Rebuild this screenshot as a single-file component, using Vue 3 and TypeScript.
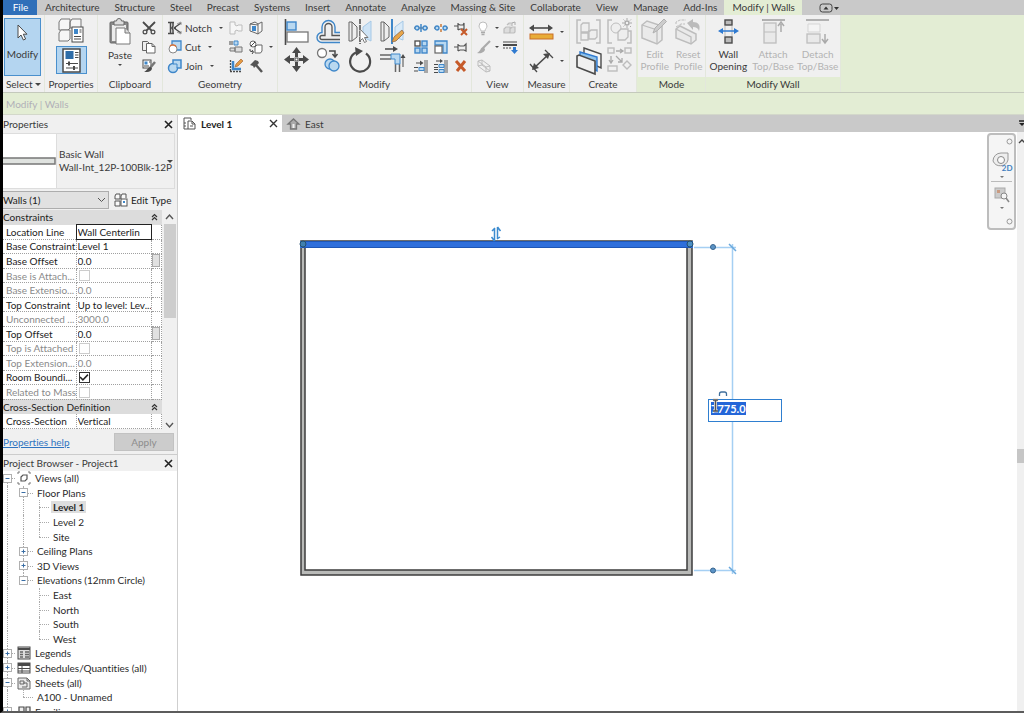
<script setup lang="ts">
import { onMounted, ref } from 'vue'

const K = '#4a4a4a'
const B = '#3f87c9'
const L = '#b9d8f0'
const G = '#bdbdbd'

const tabs: string[] = [
  'Architecture', 'Structure', 'Steel', 'Precast', 'Systems', 'Insert', 'Annotate',
  'Analyze', 'Massing & Site', 'Collaborate', 'View', 'Manage', 'Add-Ins',
]

/* Inner markup for every ribbon glyph, keyed by command. */
const icons: Record<string, string> = {
  cursor: `<path d="M2 1v13l3-3 2.4 5 2.2-1-2.3-4.8H11z" fill="#fff" stroke="${K}"/>`,
  typeProps: `<g fill="#f6f6f6" stroke="#777"><path d="M1 4l2-3h9v9l-2 2H1zM12 4l2-3h9v9h-11z"/><path d="M1 15l2-3h9v9l-2 2H1z"/></g><rect x="14" y="9" width="11" height="15" fill="#fff" stroke="${K}"/><rect x="16" y="11" width="4" height="5" fill="${B}"/><path d="M21.500 12h2M21.500 14h2M16 18.500h7M16 21h7" stroke="${K}"/>`,
  propsPanel: `<rect x="1" y="1" width="17" height="23" fill="#fff" stroke="${K}" stroke-width="1.500"/><rect x="3.500" y="3" width="8" height="8" fill="#2e6da8"/><path d="M13 4.500h3.500M13 7h3.500M13 9.500h3.500M4 15.500h12M4 20h12" stroke="${K}" stroke-width="1.200"/><path d="M7 13.500v4M12 18v4" stroke="${K}" stroke-width="2"/>`,
  paste: `<rect x="1" y="3" width="18" height="21" rx="1" fill="#8a8a8a" stroke="#666"/><rect x="3" y="6" width="14" height="16" fill="#ececec"/><path d="M5 2h2.500a2.500 2.500 0 015 0H15v4H5z" fill="#ddd" stroke="#666"/><path d="M7 9h9l5 5v11H7z" fill="#fff" stroke="#777"/><path d="M16 9v5h5" fill="#ddd" stroke="#777"/>`,
  scissors: `<path d="M1 1l9 9M13 1L4 10" stroke="${K}" stroke-width="1.800"/><circle cx="3" cy="11" r="1.900" fill="#eee" stroke="${K}" stroke-width="1.200"/><circle cx="11" cy="11" r="1.900" fill="#eee" stroke="${K}" stroke-width="1.200"/>`,
  copyClip: `<path d="M.5 1.500h5l2 2v7h-7z" fill="#eee" stroke="#666"/><path d="M4.500 3.500H10l3 3V13H4.500z" fill="#fff" stroke="#666"/><path d="M10 3.500v3h3" fill="none" stroke="#666"/>`,
  match: `<rect x="1" y="1" width="8" height="8" fill="#fff" stroke="${K}"/><rect x="2.500" y="2.500" width="3" height="3" fill="${B}"/><path d="M2 7h5M7 3h1.500" stroke="${K}"/><path d="M13 3L8 9" stroke="#777" stroke-width="2.500"/><path d="M8.500 8c-3 0-3 4-6.500 4.500 4 1.500 7.500 0 8-3z" fill="${K}"/>`,
  notch: `<path d="M0 1.500h6M0 12.500h6M2.500 1v12M5 2v3L4 7l1 2v3" fill="none" stroke="${K}" stroke-width="1.500"/><path d="M13 2L6 7l7 5M6 7h2" fill="none" stroke="${K}" stroke-width="1.300"/><path d="M9 3l4-2v3M9 11l4 2v-3" stroke="#999" fill="none"/>`,
  cutGeo: `<path d="M4 5V1h9v9H9" fill="${L}" stroke="${B}" stroke-width="1.300"/><circle cx="5" cy="9" r="4" fill="#fff" stroke="#888"/><path d="M2 6a4 4 0 016 .5" fill="none" stroke="#e07030" stroke-width="1.300"/>`,
  joinGeo: `<path d="M5 4.500V1h8v8H9.500a4.500 4.500 0 11-4.500-4.500z" fill="${L}" stroke="${B}" stroke-width="1.500"/><path d="M5 5h4v4" fill="none" stroke="${B}"/>`,
  cope: `<path d="M1 1h5v3l2 1 1-1h4v6H9L8 9 6 10v3H1z" fill="#f6f6f6" stroke="${G}"/>`,
  beamJoin: `<path d="M1 1v4M3 1v4" stroke="${K}"/><path d="M5 1h4v4H5z" fill="${L}" stroke="${B}"/><path d="M1 8h5v3H1zM6 7h7v5H6z" fill="#ddd" stroke="#777"/>`,
  unjoin: `<path d="M1.500 1v12M1 12.500h12" stroke="${K}" stroke-width="1.300" stroke-dasharray="2 1"/><path d="M4 2v8h8" fill="none" stroke="${B}" stroke-width="2.500"/><path d="M6 8l1-3 5-5 2 2-5 5z" fill="#e59a42" stroke="#a86a3a" stroke-width=".7"/>`,
  wallJoin: `<path d="M1 3l5-2 3 2 4-2v9l-4 3-5-2-3-1z" fill="#f6f6f6" stroke="#666"/><path d="M9 3v10M1 3l8 1" fill="none" stroke="#666"/><path d="M3 5h4v5H3z" fill="${B}"/>`,
  splitFace: `<circle cx="4" cy="4" r="3" fill="#fff" stroke="#666"/><path d="M2 6l4-4M1 9v2l3 1M3 10l1.500 2L3 14" fill="none" stroke="${K}"/><path d="M6 7l2-2h5v6l-1.500 2H6z" fill="#fff" stroke="#666"/>`,
  demolish: `<path d="M7 6l6 7" stroke="#555" stroke-width="2.400"/><path d="M1 6l5-5 3 1 1 2-5 5-1-2z" fill="#555"/>`,
  align: `<path d="M1.500 0v26" stroke="${K}" stroke-width="1.600"/><rect x="3" y="3" width="9" height="8" fill="${L}" stroke="${B}" stroke-width="1.400"/><rect x="3" y="13" width="21" height="10" fill="#fff" stroke="#777" stroke-width="1.300"/>`,
  offset: `<path d="M24 16.500h-8V8a3.500 3.500 0 00-7 0v8.500H6a2 2 0 000 4h18" fill="none" stroke="#555" stroke-width="1.300"/><path d="M24 13.500h-5V8a6.500 6.500 0 00-13 0v5.500a5 5 0 000 10h18" fill="none" stroke="${B}" stroke-width="1.400"/>`,
  mirrorPick: `<path d="M1 3h3l5 5v10l-5 4H1zM4 3v19" fill="#eee" stroke="#666"/><path d="M12 0v25" stroke="${K}" stroke-width="1.500" stroke-dasharray="5 1"/><path d="M23 2v20l-8-4V8z" fill="#cfe4f6" stroke="#a5c8e6"/><path d="M12 10v12l2.500-2.500 2 4 2-1-2-4H20z" fill="#fff" stroke="#777"/>`,
  mirrorDraw: `<path d="M1 3h3l5 5v10l-5 4H1zM4 3v19" fill="#eee" stroke="#666"/><path d="M12 0v25" stroke="${B}" stroke-width="2"/><path d="M23 2v19l-8-3V8z" fill="#d9eaf8" stroke="#a5c8e6"/><path d="M12 23l2-5 8-7 2 3-8 8z" fill="#e8a548" stroke="#8b6a4b" stroke-width=".8"/>`,
  move: `<path d="M12.500 0l4.500 6h-3v4h-3V6H8zM12.500 25l4.500-6h-3v-4h-3v4H8zM0 12.500L6 8v3h4v3H6v3zM25 12.500L19 8v3h-4v3h4v3z" fill="${K}"/><rect x="11" y="11" width="3" height="3" fill="#fff" stroke="${K}"/>`,
  copyObj: `<circle cx="6" cy="6" r="4.500" fill="#fff" stroke="#777" stroke-width="1.300"/><path d="M13 4h6v5M16.500 7L19 10l2.500-3" fill="none" stroke="${K}" stroke-width="1.500"/><circle cx="14" cy="17" r="5" fill="${L}" stroke="${B}" stroke-width="1.300"/><circle cx="18" cy="19" r="5" fill="${L}" stroke="${B}" stroke-width="1.300"/>`,
  rotate: `<path d="M8 5.500A10 10 0 1018 6.500" fill="none" stroke="${K}" stroke-width="2.200"/><path d="M7 0l8 4-7 5z" fill="${K}"/>`,
  trimCorner: `<path d="M0 8h11M0 12h11M15.500 25V17M19.500 25V17" stroke="#666" stroke-width="1.500"/><path d="M5 2h10" stroke="${K}" stroke-width="1.500"/><path d="M13-1l5 3-5 3z" fill="${K}"/><path d="M11 7h9v10h-5v-5h-4z" fill="${L}" stroke="${B}"/><path d="M23 20V9" stroke="${K}"/><path d="M20.500 11L23 7l2.500 4z" fill="${K}"/>`,
  split: `<path d="M0 7h14" stroke="${K}"/><rect x="1" y="5" width="4" height="4" rx="2" fill="${L}" stroke="${B}" stroke-width="1.300"/><rect x="9" y="5" width="4" height="4" rx="2" fill="${L}" stroke="${B}" stroke-width="1.300"/><path d="M7 3v8" stroke="${B}" stroke-width="1.500"/>`,
  splitGap: `<path d="M0 7h5M9 7h5" stroke="${K}"/><rect x="1" y="5" width="4" height="4" rx="2" fill="${L}" stroke="${B}" stroke-width="1.300"/><rect x="9" y="5" width="4" height="4" rx="2" fill="${L}" stroke="${B}" stroke-width="1.300"/><path d="M7 3v3M7 8v3" stroke="#c77a3a" stroke-width="1.500"/>`,
  unpin: `<path d="M0 5h4M4 2v7M4 3l2 1h3l1-2v7l-1-1H6L4 9" fill="none" stroke="#555" stroke-width="1.200"/><path d="M7 8l6 6M13 8l-6 6" stroke="#c65a2a" stroke-width="2"/>`,
  array: `<g fill="${L}" stroke="${B}" stroke-width="1.400"><rect x="1" y="8" width="5" height="5"/><rect x="8" y="8" width="5" height="5"/><rect x="8" y="1" width="5" height="5"/></g><rect x="1" y="1" width="5" height="5" fill="#fff" stroke="${K}" stroke-width="1.300"/>`,
  scale: `<path d="M1 1h12v12H9V5H1z" fill="${L}" stroke="${B}" stroke-width="1.300"/><rect x="1" y="6" width="7" height="7" fill="#fff" stroke="#666" stroke-width="1.200"/>`,
  pin: `<path d="M0 7h4M4 4v7M4 5l2 1h4l2-2v7l-2-1H6l-2 1" fill="none" stroke="#555" stroke-width="1.200"/>`,
  trimSingle: `<path d="M2 4h5M0 8.500h4M0 12h4" stroke="${K}" stroke-width="1.200"/><path d="M6 1.500L9.500 4 6 6.500z" fill="${K}"/><path d="M11 1v13M13 1v13" stroke="#777" stroke-width="1.200"/><rect x="5" y="8.500" width="5" height="3" fill="${L}" stroke="${B}"/>`,
  trimMulti: `<path d="M2 2h5M0 5.500h4M0 8.500h4M0 10.500h4M0 13.500h4" stroke="${K}"/><path d="M6 0l3 2-3 2z" fill="${K}"/><path d="M11 1v13M13 1v13" stroke="#777" stroke-width="1.200"/><path d="M5 5.500h5v3H5zM5 10.500h5v3H5z" fill="${L}" stroke="${B}"/>`,
  del: `<path d="M2 2l9 10M11 2L3 12" stroke="#c65a2a" stroke-width="3"/>`,
  bulb: `<path d="M4 10C4 8 2 7 2 5a4 4 0 018 0c0 2-2 3-2 5z" fill="#fff" stroke="${G}"/><path d="M4 11.500h4M4.500 13.500h3" stroke="#aaa" stroke-width="1.500"/>`,
  displace: `<path d="M1 8l2-2h4v5l-1 1H1zM7 8l2-2h3v5l-1 1H7zM4 4l2-2h3v3" fill="#ddd" stroke="${G}" stroke-width="1.200"/><path d="M9 2l3-1v3" fill="none" stroke="#aaa"/>`,
  brush: `<path d="M13 1L6 8" stroke="#aaa" stroke-width="2.200"/><path d="M6 7C3 8 4 11 0 13c4 1 8-1 8-4z" fill="#aaa"/>`,
  linework: `<path d="M0 2h14" stroke="${K}"/><path d="M0 5h14" stroke="${K}" stroke-width="2"/><path d="M0 8h9" stroke="${K}" stroke-dasharray="2 1"/><path d="M8 10h2V7h3v3h2l-3.500 4z" fill="#2f7ad0"/>`,
  selBox: `<path d="M1 2l4-1 8 6v5l-4 1-8-6zM1 2l8 6v5M9 8l4-1M5 1v5l8 6M5 6L1 7" fill="none" stroke="${G}"/>`,
  measure: `<path d="M3 4h18" stroke="${K}" stroke-width="1.600"/><path d="M0 4l5-3.500v7zM24 4l-5-3.500v7z" fill="${K}"/><rect x="1" y="10" width="23" height="5" fill="#e8ac38" stroke="#c96f28"/>`,
  dimension: `<path d="M4 20L20 5" stroke="${K}" stroke-width="1.600"/><path d="M1 15l7 8M16 1l8 8" stroke="${K}" stroke-width="1.300"/><path d="M3 21l2-7 5 5zM21 4l-7 1 5 5z" fill="${K}"/>`,
  group: `<path d="M5 1H1v23h4M20 1h4v23h-4" fill="none" stroke="${G}" stroke-width="1.500"/><path d="M5 6l2-2h6v7l-1 2H5zM5 14h7v7H5zM13 13l2-2h6v7l-2 2h-6z" fill="#eee" stroke="${G}" stroke-width="1.300"/>`,
  assembly: `<path d="M5 1H1v23h4M20 12h4v12h-4" fill="none" stroke="${G}" stroke-width="1.500"/><circle cx="9" cy="9" r="5" fill="#eee" stroke="${G}"/><path d="M11 13l3-3h7v8l-3 3h-7z" fill="#eee" stroke="${G}" stroke-width="1.300"/><circle cx="20" cy="4" r="2" fill="none" stroke="#aaa" stroke-width="1.500"/><path d="M20-1v2M20 7v2M15 4h2M23 4h2M16.500.5l1 1M23 7l1 1M24 .5l-1 1M16.500 7.500l1-1" stroke="#aaa"/>`,
  parts: `<path d="M8 1l17 6v14L8 13z" fill="#f4f4f4" stroke="${K}" stroke-width="1.400"/><path d="M4 5l17 5v14L4 16z" fill="#8fc2ea" stroke="#2f7ad0" stroke-width="1.400"/><path d="M1 9l2-1 16 6v13L1 20z" fill="#f0f0f0" stroke="${K}" stroke-width="1.600"/>`,
  similar: `<g fill="none" stroke="${G}" stroke-width="1.400"><rect x="1" y="1" width="6" height="5"/><rect x="18" y="1" width="6" height="5"/><rect x="1" y="19" width="9" height="5"/><path d="M20 14l4 4-4 4-4-4z"/></g><path d="M9 4h7M4 9v7M9 9l6 6M13 2l3 2-3 2M2 13l2 3 2-3M15 11v4h-4" fill="none" stroke="#aaa" stroke-width="1.300"/>`,
  editProfile: `<path d="M1 6l5-4 15 5v14l-5 4L1 19z" fill="#eaeaea" stroke="${G}" stroke-width="1.500"/><path d="M1 6l15 5v14M16 11l5-4" fill="none" stroke="${G}" stroke-width="1.300"/><path d="M12 14l2-5 9-9 2.500 2.500-9 9z" fill="#ccc" stroke="#b0b0b0"/>`,
  resetProfile: `<path d="M1 8l5-3h4M1 5V3l4-2h6" fill="none" stroke="${G}" stroke-dasharray="3 1"/><path d="M1 10l4-3 16 8v6l-5 4L1 19z" fill="#eaeaea" stroke="${G}" stroke-width="1.500"/><path d="M1 10l15 8v7" fill="none" stroke="${G}" stroke-width="1.300"/><path d="M12 4l6-4v3c5 0 8 3 6 9-1-3-3-4-6-4v3z" fill="#bbb"/>`,
  opening: `<rect x="8" y="1" width="7" height="5" fill="#bbb" stroke="${K}" stroke-width="1.400"/><rect x="8" y="18" width="7" height="6" fill="#bbb" stroke="${K}" stroke-width="1.400"/><path d="M8 7v10M15 7v10" stroke="#bbb"/><path d="M3 12h17" stroke="#2f7ad0" stroke-width="1.500"/><path d="M1 12l5-3v6zM22 12l-5-3v6z" fill="#2f7ad0"/>`,
  attach: `<path d="M0 1h23" stroke="#aaa" stroke-width="1.800"/><rect x="2" y="4" width="12" height="20" fill="#e9e9e9" stroke="${G}" stroke-width="1.300"/><path d="M2 13h12" stroke="${G}"/><path d="M19 13V5M16 7l3-4 3 4" fill="none" stroke="#aaa" stroke-width="1.500"/>`,
  detach: `<path d="M0 1h23" stroke="#aaa" stroke-width="1.800"/><path d="M2 5h12v8H2z" fill="#f4f4f4" stroke="#d5d5d5"/><rect x="1" y="15" width="13" height="9" fill="#e9e9e9" stroke="${G}" stroke-width="1.300"/><path d="M19 15v8M16 20l3 4 3-4" fill="none" stroke="#aaa" stroke-width="1.500"/>`,
}

const clipTools = ['scissors', 'copyClip', 'match']
const geoMenus = [
  { icon: 'notch', text: 'Notch' },
  { icon: 'cutGeo', text: 'Cut' },
  { icon: 'joinGeo', text: 'Join' },
]
const geoTools = ['cope', 'wallJoin', 'beamJoin', 'splitFace', 'unjoin', 'demolish']
const modifyLarge = ['align', 'offset', 'mirrorPick', 'mirrorDraw', 'move', 'copyObj', 'rotate', 'trimCorner']
const modifySmall = ['split', 'splitGap', 'unpin', 'array', 'scale', 'pin', 'trimSingle', 'trimMulti', 'del']
const createTools = ['group', 'assembly', 'parts', 'similar']
const modeTools = [
  { icon: 'editProfile', a: 'Edit', b: 'Profile' },
  { icon: 'resetProfile', a: 'Reset', b: 'Profile' },
]
const wallTools = [
  { icon: 'opening', a: 'Wall', b: 'Opening', on: true },
  { icon: 'attach', a: 'Attach', b: 'Top/Base', on: false },
  { icon: 'detach', a: 'Detach', b: 'Top/Base', on: false },
]

interface Prop {
  id: string
  label: string
  value?: string
  check?: boolean
  off?: boolean
  more?: boolean
  framed?: boolean
}
const groups: { title: string; rows: Prop[] }[] = [
  {
    title: 'Constraints',
    rows: [
      { id: 'loc', label: 'Location Line', value: 'Wall Centerlin', framed: true },
      { id: 'bc', label: 'Base Constraint', value: 'Level 1' },
      { id: 'bo', label: 'Base Offset', value: '0.0', more: true },
      { id: 'ba', label: 'Base is Attach...', check: false, off: true },
      { id: 'be', label: 'Base Extensio...', value: '0.0', off: true },
      { id: 'tc', label: 'Top Constraint', value: 'Up to level: Lev...' },
      { id: 'uh', label: 'Unconnected ...', value: '3000.0', off: true },
      { id: 'to', label: 'Top Offset', value: '0.0', more: true },
      { id: 'ta', label: 'Top is Attached', check: false, off: true },
      { id: 'te', label: 'Top Extension...', value: '0.0', off: true },
      { id: 'rb', label: 'Room Boundi...', check: true },
      { id: 'rm', label: 'Related to Mass', check: false, off: true },
    ],
  },
  { title: 'Cross-Section Definition', rows: [{ id: 'cs', label: 'Cross-Section', value: 'Vertical' }] },
]

/* Guide cells: b = box, l = line, t = tee, e = end elbow, n = empty. */
interface Node {
  text: string
  cells: string
  sign?: string
  icon?: string
  bold?: boolean
}
const tree: Node[] = [
  { text: 'Views (all)', cells: 'b', sign: '-', icon: 'views' },
  { text: 'Floor Plans', cells: 'lb', sign: '-' },
  { text: 'Level 1', cells: 'llt', bold: true },
  { text: 'Level 2', cells: 'llt' },
  { text: 'Site', cells: 'lle' },
  { text: 'Ceiling Plans', cells: 'lb', sign: '+' },
  { text: '3D Views', cells: 'lb', sign: '+' },
  { text: 'Elevations (12mm Circle)', cells: 'lb', sign: '-' },
  { text: 'East', cells: 'lnt' },
  { text: 'North', cells: 'lnt' },
  { text: 'South', cells: 'lnt' },
  { text: 'West', cells: 'lne' },
  { text: 'Legends', cells: 'b', sign: '+', icon: 'legends' },
  { text: 'Schedules/Quantities (all)', cells: 'b', sign: '+', icon: 'schedules' },
  { text: 'Sheets (all)', cells: 'b', sign: '-', icon: 'sheets' },
  { text: 'A100 - Unnamed', cells: 'le' },
  { text: 'Families', cells: 'b', sign: '+', icon: 'families' },
]
const treeIcons: Record<string, string> = {
  views: `<path d="M3 1H1v2M11 1h2v2M3 13H1v-2M11 13h2v-2" fill="none" stroke="#777"/><path d="M4 6l2-2h4v4l-2 2H4z" fill="#fff" stroke="#555" stroke-width="1.200"/>`,
  legends: `<rect x="1" y="1" width="12" height="12" fill="#ddd" stroke="${K}"/><path d="M1 3h12" stroke="${K}" stroke-width="2"/><path d="M3 6h3M3 8.500h3M3 11h3M8 6h4M8 8.500h4M8 11h4" stroke="#666" stroke-width="1.300"/>`,
  schedules: `<rect x="1" y="2" width="12" height="10" fill="#fff" stroke="${K}"/><path d="M1 3.500h12" stroke="${K}" stroke-width="3"/><path d="M1 7.500h12M1 10h12M5 4v8" stroke="${K}"/>`,
  sheets: `<path d="M1 2h9l3 3v8H1z" fill="#e8e8e8" stroke="#666"/><path d="M3 5h4v3H3zM6 7h4v4H5M10 2v3h3" fill="none" stroke="#666"/>`,
  families: `<path d="M2 2h5v6H2zM9 2h4v6H9zM2 10h5v4H2zM9 10h4v4H9z" fill="#eee" stroke="${K}" stroke-width="1.200"/>`,
}

const length = ref('7775.0')
const lengthBox = ref<HTMLInputElement | null>(null)
onMounted(() => {
  lengthBox.value?.focus()
  lengthBox.value?.select()
})
</script>

<template>
  <div class="app">
    <nav class="tabs">
      <button class="file">File</button>
      <button v-for="t in tabs" :key="t">{{ t }}</button>
      <button class="current">Modify | Walls</button>
      <button class="collapse" aria-label="Minimize ribbon">
        <svg width="20" height="10"><rect x="1" y="1" width="12" height="8" rx="2.500" fill="none" stroke="#444" /><path d="M4.500 6.500L7 3.500l2.500 3zM15 4h5l-2.500 3z" fill="#333" /></svg>
      </button>
    </nav>

    <div class="ribbon">
      <section class="panel w-select">
        <div class="tools">
          <button class="big-modify"><svg width="13" height="18" v-html="icons.cursor" /><span>Modify</span></button>
        </div>
        <h2>Select <i class="caret wide" /></h2>
      </section>

      <section class="panel w-props">
        <div class="tools column">
          <button aria-label="Type Properties"><svg width="26" height="25" v-html="icons.typeProps" /></button>
          <button class="pressed" aria-label="Properties"><svg width="19" height="25" v-html="icons.propsPanel" /></button>
        </div>
        <h2>Properties</h2>
      </section>

      <section class="panel w-clip">
        <div class="tools clip">
          <button class="paste"><svg width="23" height="27" v-html="icons.paste" /><span>Paste</span><i class="caret" /></button>
          <div class="triple">
            <button v-for="n in clipTools" :key="n" :aria-label="n"><svg width="14" height="14" v-html="icons[n]" /></button>
          </div>
        </div>
        <h2>Clipboard</h2>
      </section>

      <section class="panel w-geo">
        <div class="tools geo">
          <div class="triple menus">
            <button v-for="m in geoMenus" :key="m.text"><svg width="14" height="14" v-html="icons[m.icon]" /><span>{{ m.text }}</span><i class="caret" /></button>
          </div>
          <div class="pairs">
            <button v-for="n in geoTools" :key="n" :aria-label="n"><svg width="14" height="14" v-html="icons[n]" /></button>
          </div>
          <i class="caret" />
        </div>
        <h2>Geometry</h2>
      </section>

      <section class="panel w-mod">
        <div class="tools mod">
          <div class="large">
            <button v-for="n in modifyLarge" :key="n" :aria-label="n"><svg width="25" height="26" v-html="icons[n]" /></button>
          </div>
          <div class="small">
            <button v-for="n in modifySmall" :key="n" :aria-label="n"><svg width="14" height="14" v-html="icons[n]" /></button>
          </div>
        </div>
        <h2>Modify</h2>
      </section>

      <section class="panel w-view">
        <div class="tools view">
          <button aria-label="Hide"><svg width="14" height="14" v-html="icons.bulb" /><i class="caret" /></button>
          <button aria-label="Displace"><svg width="14" height="14" v-html="icons.displace" /></button>
          <button aria-label="Override"><svg width="14" height="14" v-html="icons.brush" /><i class="caret" /></button>
          <button aria-label="Linework"><svg width="14" height="14" v-html="icons.linework" /></button>
          <button aria-label="Selection Box"><svg width="14" height="14" v-html="icons.selBox" /></button>
        </div>
        <h2>View</h2>
      </section>

      <section class="panel w-meas">
        <div class="tools column meas">
          <button aria-label="Measure"><svg width="25" height="17" v-html="icons.measure" /><i class="caret" /></button>
          <button aria-label="Dimension"><svg width="25" height="25" v-html="icons.dimension" /><i class="caret" /></button>
        </div>
        <h2>Measure</h2>
      </section>

      <section class="panel w-create">
        <div class="tools create">
          <button v-for="n in createTools" :key="n" :aria-label="n"><svg width="26" height="27" v-html="icons[n]" /></button>
        </div>
        <h2>Create</h2>
      </section>

      <section class="panel w-mode context">
        <div class="tools captioned">
          <button v-for="m in modeTools" :key="m.a" disabled><svg width="27" height="26" v-html="icons[m.icon]" /><span>{{ m.a }}<br />{{ m.b }}</span></button>
        </div>
        <h2>Mode</h2>
      </section>

      <section class="panel w-wall context">
        <div class="tools captioned">
          <button v-for="m in wallTools" :key="m.a" :disabled="!m.on"><svg width="23" height="26" v-html="icons[m.icon]" /><span>{{ m.a }}<br />{{ m.b }}</span></button>
        </div>
        <h2>Modify Wall</h2>
      </section>
    </div>

    <div class="options">Modify | Walls</div>

    <main class="work">
      <aside class="side">
        <header class="bar">
          <span>Properties</span>
          <button aria-label="Close Properties"><svg width="9" height="9"><path d="M1 1l7 7M8 1L1 8" stroke="#222" stroke-width="1.600" /></svg></button>
        </header>

        <button class="type">
          <svg class="preview" width="53" height="54"><rect width="53" height="54" fill="#fff" /><rect x="-1" y="24" width="53" height="6" fill="#dfe2df" stroke="#777" stroke-width="1.500" /></svg>
          <span>Basic Wall<br />Wall-Int_12P-100Blk-12P</span>
          <i class="caret wide" />
        </button>

        <div class="filter">
          <span class="pick">
            <select aria-label="Selection filter"><option>Walls (1)</option></select>
            <svg width="9" height="6"><path d="M1 1l3.500 3.500L8 1" fill="none" stroke="#555" /></svg>
          </span>
          <button class="edit-type">
            <svg width="14" height="14"><path d="M1 3l1-2h4v5H1zM7 6V3l1-2h4v4M1 8h5v5H1z" fill="#f8f8f8" stroke="#555" /><rect x="7" y="6" width="6" height="7" fill="#fff" stroke="#555" /><path d="M9 8h2v2H9z" fill="#3f87c9" /></svg>
            Edit Type
          </button>
        </div>

        <div class="grid">
          <table>
            <colgroup><col class="name-col" /><col /><col class="more-col" /></colgroup>
            <tbody v-for="g in groups" :key="g.title">
              <tr class="group">
                <th colspan="3"><div><span>{{ g.title }}</span><svg width="7" height="8"><path d="M1 4l2.500-2.500L6 4M1 7l2.500-2.500L6 7" fill="none" stroke="#333" stroke-width="1.200" /></svg></div></th>
              </tr>
              <tr v-for="r in g.rows" :key="r.id" :class="{ off: r.off }">
                <td class="name"><label :for="r.id">{{ r.label }}</label></td>
                <td class="val" :class="{ framed: r.framed }">
                  <input v-if="r.value" :id="r.id" type="text" :value="r.value" :disabled="r.off" />
                  <input v-else :id="r.id" type="checkbox" :checked="r.check" :disabled="r.off" />
                </td>
                <td class="more"><button v-if="r.more" :aria-label="`Associate ${r.label}`" /></td>
              </tr>
            </tbody>
          </table>
          <div class="scroll">
            <svg width="9" height="6"><path d="M1 5l3.500-4L8 5" fill="none" stroke="#555" stroke-width="1.400" /></svg>
            <i />
            <svg width="9" height="6"><path d="M1 1l3.500 4L8 1" fill="none" stroke="#555" stroke-width="1.400" /></svg>
          </div>
        </div>

        <footer class="apply"><a href="#">Properties help</a><button disabled>Apply</button></footer>

        <header class="bar browser">
          <span>Project Browser - Project1</span>
          <button aria-label="Close Project Browser"><svg width="9" height="9"><path d="M1 1l7 7M8 1L1 8" stroke="#222" stroke-width="1.600" /></svg></button>
        </header>
        <div class="tree-box">
          <ul class="tree">
            <li v-for="n in tree" :key="n.text" :class="{ root: n.icon }">
              <template v-for="(c, i) in n.cells" :key="i">
                <span class="cell" :class="[c, { top: n.text === 'Views (all)', last: n.text.startsWith('Elevations') }]"><button v-if="c === 'b'" :aria-label="`Toggle ${n.text}`"><svg width="7" height="7"><path d="M1.500 3.500h4" stroke="#3a6ea5" /><path v-if="n.sign === '+'" d="M3.500 1.500v4" stroke="#3a6ea5" /></svg></button></span>
              </template>
              <svg v-if="n.icon" class="glyph" width="14" height="14" v-html="treeIcons[n.icon]" />
              <span class="text" :class="{ bold: n.bold }">{{ n.text }}</span>
            </li>
          </ul>
        </div>
      </aside>

      <section class="stage">
        <div class="docs">
          <div class="doc active">
            <svg width="13" height="13"><path d="M1 1h7v2M5 12H1V1M5 12V4h4l3 3v5zM9 4v3h3M1 6h2M3 9H1M7 9h3" fill="none" stroke="#555" /></svg>
            <button class="title">Level 1</button>
            <button class="x" aria-label="Close Level 1"><svg width="9" height="9"><path d="M1 1l7 7M8 1L1 8" stroke="#333" stroke-width="1.400" /></svg></button>
          </div>
          <div class="doc">
            <svg width="13" height="12"><path d="M1 6l5.500-5L12 6H9.500v5h-6V6z" fill="#aaa" stroke="#777" stroke-width="1.300" /><path d="M5.500 6h2v4h-2z" fill="#eee" /></svg>
            <button class="title">East</button>
          </div>
          <button class="list" aria-label="Open views"><svg width="5" height="7"><path d="M0 1h5" stroke="#222" stroke-width="1.500" /><path d="M0 3h6L3 6z" fill="#222" /></svg></button>
        </div>

        <div class="view-row">
          <div class="canvas">
            <svg class="drawing" width="100%" height="100%">
              <path d="M123 109h391v334H123z M127 115v323h382V115z" fill="#b9bab8" fill-rule="evenodd" stroke="#3d3d3d" stroke-width="1.500" />
              <rect x="122" y="109" width="393" height="7" fill="#2f6fdb" />
              <path d="M124 109.500h389M124 115.500h389" stroke="#1f56b5" />
              <circle cx="125" cy="112" r="3" fill="#3f7fae" stroke="#24506f" />
              <circle cx="512" cy="112" r="3" fill="#4c8fc4" stroke="#24506f" />
              <path d="M316.500 109V96M319.500 95v12M313.500 105l3 4M319.500 95l3 4M317 96l-3 3M319 107l3-2" fill="none" stroke="#3c8bcf" stroke-width="1.500" />
              <path d="M516 115.500h42M516 438.500h42M554.500 112v330" stroke="#a5cff3" stroke-width="1.500" />
              <path d="M551 112l7 7M551 435l7 7" stroke="#6aa9dd" stroke-width="1.500" />
              <circle cx="535" cy="115" r="2.500" fill="#5b93c6" stroke="#37658f" />
              <circle cx="535" cy="438.500" r="2.500" fill="#5b93c6" stroke="#37658f" />
              <path d="M541.500 264v-2q0-2 2-2h3q2 0 2 2v2" fill="none" stroke="#3f6f9d" stroke-width="1.300" />
            </svg>
            <input ref="lengthBox" v-model="length" class="length" type="text" aria-label="Distance" />
            <svg class="ibeam" width="7" height="13"><path d="M1 1h2l.5 1 .5-1h2M3.500 2v9M1 12h2l.5-1 .5 1h2" fill="none" stroke="#dcdcdc" stroke-width="3" /><path d="M1 1h2l.5 1 .5-1h2M3.500 2v9M1 12h2l.5-1 .5 1h2" fill="none" stroke="#555" stroke-width="1.300" /></svg>
            <div class="nav">
              <svg width="7" height="7"><circle cx="3.500" cy="3.500" r="2.500" fill="none" stroke="#999" /></svg>
              <button aria-label="Steering wheel 2D">
                <svg width="22" height="22"><path d="M2 11a8 8 0 018-8h7v7a8 8 0 01-15 1z" fill="#eee" stroke="#999" /><circle cx="10" cy="10" r="3.500" fill="#fafafa" stroke="#888" /></svg>
                <b>2D</b>
              </button>
              <i class="caret" />
              <hr />
              <button aria-label="Zoom"><svg width="16" height="16"><rect x="1" y="1" width="10" height="10" fill="#ccc" stroke="#aaa" /><path d="M3 3h3v3H3z" fill="#c99b82" /><circle cx="10" cy="9" r="3" fill="#f5f5f5" stroke="#888" /><path d="M12 11l3 4" stroke="#888" stroke-width="1.500" /></svg></button>
              <i class="caret" />
              <svg class="foot" width="7" height="7"><circle cx="3.500" cy="3.500" r="2.500" fill="none" stroke="#999" /></svg>
            </div>
          </div>
          <div class="vscroll"><svg width="7" height="7"><path d="M2 5l3-3 3 3" fill="none" stroke="#444" stroke-width="1.400" /></svg><i /></div>
        </div>
      </section>
    </main>
  </div>
</template>

<style>
body { margin: 0; }
</style>

<style scoped>
* { box-sizing: border-box; }
.app {
  display: flex;
  flex-direction: column;
  height: 100vh;
  overflow: hidden;
  border-left: 3px solid #000;
  border-bottom: 2px solid #5c5c5c;
  background: #f0f0f0;
  color: #3a3a3a;
  font: 10px/12px Lato, "Open Sans", sans-serif;
  font-variant-ligatures: none;
}
button, input, select { font: inherit; font-variant-ligatures: none; color: inherit; }
button { padding: 0; border: 0; background: none; display: flex; align-items: center; justify-content: center; }
svg { display: block; flex: none; overflow: visible; }
h2 { margin: 0; font-size: 10px; line-height: 15px; font-weight: 400; text-align: center; }
.caret { flex: none; width: 0; height: 0; border: 2px solid transparent; border-top-color: #444; border-bottom: 0; }
.caret.wide { display: inline-block; border-width: 3px 3px 0; vertical-align: 2px; }

.tabs { display: flex; flex: none; height: 15px; background: #c9c9c9; }
.tabs button { padding: 0 7px 1px 8px; white-space: nowrap; }
.tabs .file { width: 34px; background: #2f6fb9; color: #fff; }
.tabs .current { background: #e3edd4; }
.tabs .collapse { padding: 0 17px; }

.ribbon { display: flex; flex: none; height: 77px; background: #e3edd4; }
.panel { display: flex; flex-direction: column; flex: none; background: #f0f0f0; border-right: 1px solid #e3e7dc; }
.tools { flex: 1; display: flex; padding-top: 3px; }
.panel h2 { flex: none; white-space: nowrap; }
.context h2 { background: #e3edd4; }
.w-select { width: 42px; }
.w-props { width: 53px; }
.w-clip { width: 65px; }
.w-geo { width: 115px; }
.w-mod { width: 194px; }
.w-view { width: 52px; }
.w-meas { width: 46px; }
.w-create { width: 67px; margin-right: 1px; }
.w-mode { width: 68px; }
.w-wall { width: 135px; }

.big-modify { flex-direction: column; justify-content: flex-start; gap: 6px; width: 37px; height: 58px; margin-left: 1px; padding-top: 5px; border: 1px solid #4a90cd; background: #b4d5f0; }
.column { flex-direction: column; align-items: center; gap: 1px; }
.column .pressed { width: 31px; height: 28px; margin-top: 2px; border: 1px solid #4a90cd; background: #b4d5f0; }
.clip { gap: 8px; padding-left: 8px; }
.paste { flex-direction: column; justify-content: flex-start; width: 28px; gap: 3px; padding-top: 1px; }
.triple { display: grid; grid-template-rows: repeat(3, 19px); }
.geo { padding-left: 5px; align-items: flex-start; }
.menus { width: 58px; }
.menus button { justify-content: flex-start; gap: 3px; }
.menus .caret { margin-left: 4px; }
.pairs { display: grid; grid-template: repeat(3, 19px) / 20px 20px; }
.geo > .caret { margin: 28px 0 0 3px; }
.mod { padding-left: 3px; gap: 2px; }
.large { display: grid; grid-template: repeat(2, 28px) / repeat(4, 32px); }
.large button { justify-content: flex-start; padding-left: 3px; }
.small { display: grid; grid-template: repeat(3, 19px) / repeat(3, 20px); }
.view { display: grid; grid-template: repeat(3, 19px) / 26px 20px; padding-left: 3px; }
.view button { justify-content: flex-start; gap: 4px; padding-left: 2px; }
.meas button { height: 28px; gap: 6px; }
.create { display: grid; grid-template: repeat(2, 28px) / 31px 31px; padding-left: 3px; }
.captioned { justify-content: center; }
.captioned button { flex: 1; flex-direction: column; justify-content: flex-start; gap: 3px; padding-top: 1px; }
.captioned button:disabled { color: #b3b3b3; }

.options { flex: none; height: 23px; padding: 0 3px; border-top: 1px solid #c4c9bc; border-bottom: 1px solid #d3d8ca; background: #e3edd4; color: #b1b0b8; line-height: 22px; }

.work { flex: 1; min-height: 0; display: flex; }
.side { flex: none; width: 175px; display: flex; flex-direction: column; min-height: 0; border-right: 1px solid #cfcfcf; background: #f0f0f0; }
.bar { flex: none; display: flex; align-items: center; justify-content: space-between; height: 18px; padding-right: 4px; }
.browser { height: 17px; border-top: 1px solid #ccc; }
.type { position: relative; flex: none; justify-content: flex-start; height: 56px; margin-right: 2px; border: 1px solid #dcdcdc; border-left: 0; text-align: left; line-height: 13px; white-space: nowrap; }
.type span { flex: 1; padding-left: 3px; }
.type .caret { position: absolute; right: 1px; top: 26px; }
.preview { outline: 1px solid #ddd; }
.filter { flex: none; display: flex; align-items: center; height: 21px; gap: 5px; }
.pick { position: relative; display: flex; align-items: center; width: 106px; height: 18px; }
.pick select { width: 100%; height: 100%; padding: 0; border: 1px solid #adadad; border-left: 0; border-radius: 0; background: #e1e1e1; appearance: none; color: #222; }
.pick svg { position: absolute; right: 3px; pointer-events: none; }
.edit-type { gap: 3px; color: #222; }

.grid { flex: none; display: flex; height: 219px; }
table { width: 159px; height: 219px; border-collapse: collapse; table-layout: fixed; background: #fff; color: #222; }
.name-col { width: 73px; }
.more-col { width: 10px; }
th, td { padding: 0; height: 14px; font-weight: 400; text-align: left; line-height: 12px; white-space: nowrap; }
th div { display: flex; align-items: center; justify-content: space-between; padding-right: 4px; }
.group { background: #dcdcdc; }
td { border-bottom: 1px dotted #a0a0a0; border-right: 1px dotted #a0a0a0; }
.name { padding-left: 3px; }
.more button { width: 8px; height: 13px; border: 1px solid #aaa; background: #e1e1e1; }
.off { color: #8a8a8a; }
.val input[type="text"] { display: block; width: 100%; height: 12px; padding: 0 0 0 1px; border: 0; outline: 0; background: none; }
.framed { border: 1px solid #222; }
.val input[type="checkbox"] { display: block; appearance: none; width: 11px; height: 11px; margin: 0 0 0 2px; border: 1px solid #333; background: #fff; }
.val input[type="checkbox"]:disabled { border-color: #ccc; }
.val input[type="checkbox"]:checked::before { content: ""; display: block; width: 9px; height: 9px; background: #222; clip-path: polygon(0 50%, 12% 38%, 38% 64%, 88% 12%, 100% 24%, 38% 88%); }
.scroll { flex: 1; display: flex; flex-direction: column; align-items: center; padding: 4px 1px 1px 1px; gap: 4px; }
.scroll i { width: 12px; height: 94px; margin-bottom: auto; background: #cdcdcd; }
.apply { flex: none; display: flex; align-items: center; justify-content: space-between; height: 25px; padding-right: 3px; }
.apply a { color: #2f74c0; }
.apply button { width: 60px; height: 18px; background: #cccccc; color: #8c8c8c; border: 1px solid #c2c2c2; }
.tree-box { flex: 1; min-height: 0; overflow: hidden; background: #fff; }
.tree { display: grid; grid-auto-rows: 1fr; min-height: 248px; margin: 0; padding: 0; list-style: none; color: #2a2a2a; }
.tree li { display: flex; align-items: center; min-height: 0; height: 100%; white-space: nowrap; }
.cell { position: relative; flex: none; width: 16px; height: 100%; display: flex; align-items: center; }
.root .cell { width: 14px; }
.glyph { margin-right: 2px; }
.cell::before, .cell::after { content: ""; position: absolute; left: 4px; }
.cell::before { top: 0; bottom: 0; border-left: 1px dotted #aaa; }
.cell::after { top: 50%; right: 2px; border-top: 1px dotted #aaa; }
.l::after, .n::after, .n::before { display: none; }
.e::before, .last.b::before { bottom: 50%; }
.top::before { top: 50%; }
.cell button { position: relative; z-index: 1; width: 9px; height: 9px; border: 1px solid #b0b0b0; background: #fff; }
.text { padding: 0 2px; }
.text.bold { font-weight: 700; background: #dedede; }

.stage { flex: 1; min-width: 0; display: flex; flex-direction: column; }
.docs { flex: none; display: flex; height: 17px; background: #c9c9c9; }
.doc { display: flex; align-items: center; padding: 0 4px 0 5px; gap: 5px; }
.doc.active { width: 104px; background: #fff; color: #222; font-weight: 700; }
.doc .x { margin-left: auto; }
.list { margin-left: auto; }
.view-row { flex: 1; min-height: 0; display: flex; }
.canvas { flex: 1; position: relative; background: #fff; overflow: hidden; }
.drawing { position: absolute; inset: 0; }
.length { position: absolute; left: 530px; top: 267px; width: 74px; height: 23px; padding: 0 2px 4px; border: 1px solid #2f7fd0; outline: 0; border-radius: 0; background: #fff; color: #222; font-size: 11px; line-height: 14px; font-weight: 700; }
.length::selection { background: #2466d8; color: #fff; }
.ibeam { position: absolute; left: 534px; top: 267px; }
.nav { position: absolute; top: 1px; right: 1px; width: 29px; height: 97px; display: flex; flex-direction: column; align-items: center; padding: 3px 0; border: 2px solid #bdbdbd; border-radius: 4px; background: #f5f5f5; }
.nav > svg { align-self: flex-end; margin-right: 1px; }
.nav > .foot { margin-top: auto; }
.nav button { position: relative; margin-top: 5px; }
.nav b { position: absolute; right: 0; bottom: 0; color: #3f7fc0; font-size: 8px; line-height: 8px; }
.nav .caret { margin-top: 4px; border-top-color: #777; }
.nav hr { width: 21px; margin: 3px 0 0; border: 0; border-top: 1px solid #bbb; }
.vscroll { flex: none; width: 7px; padding-top: 6px; background: #f0f0f0; display: flex; flex-direction: column; overflow: hidden; }
.vscroll i { height: 14px; margin-top: 304px; background: #c6c6c6; }
</style>
